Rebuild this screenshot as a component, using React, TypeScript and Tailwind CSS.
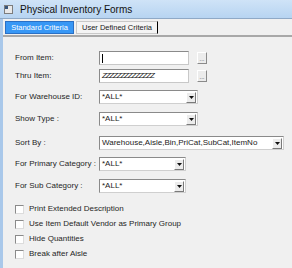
import React from "react";

function Label({ children }: { children: React.ReactNode }) {
  return <div className="w-[84px] shrink-0 text-[8px] leading-[14px] text-[#262626]">{children}</div>;
}

function TextBox({ hatched, cursor }: { hatched?: boolean; cursor?: boolean }) {
  return (
    <div className="flex items-center gap-[8px]">
      <div className="relative h-[14px] w-[90px] border border-t-[#8a8a8a] border-l-[#8a8a8a] border-b-[#c8c8c8] border-r-[#c8c8c8] bg-white overflow-hidden">
        {cursor && <div className="absolute left-[2px] top-[2px] h-[9px] w-px bg-black" />}
        {hatched && (
          <div className="pl-[2px] text-[8px] leading-[12px] italic tracking-[-1.2px] text-[#222]">ZZZZZZZZZZZZZZ</div>
        )}
      </div>
      <div className="flex h-[12px] w-[10px] items-end justify-center border border-t-white border-l-white border-b-[#8a8a8a] border-r-[#8a8a8a] bg-[#ececec] pb-[1px] text-[6px] leading-[6px] text-[#333]">
        ...
      </div>
    </div>
  );
}

function Select({ value, width }: { value: string; width: string }) {
  return (
    <div className={`flex h-[14px] ${width} items-center justify-between border border-t-[#8a8a8a] border-l-[#8a8a8a] border-b-[#cfcfcf] border-r-[#cfcfcf] bg-white pl-[2px] pr-px`}>
      <span className="text-[8px] leading-[12px] text-[#1b1b1b] whitespace-nowrap">{value}</span>
      <div className="flex h-[11px] w-[10px] items-center justify-center border border-t-white border-l-white border-b-[#7a7a7a] border-r-[#7a7a7a] bg-[#ececec]">
        <svg width="5" height="3" viewBox="0 0 5 3">
          <path d="M0 0h5L2.5 3z" fill="#111" />
        </svg>
      </div>
    </div>
  );
}

function Check({ label }: { label: string }) {
  return (
    <div className="flex items-center gap-[5px]">
      <div className="h-[9px] w-[9px] border border-t-[#8a8a8a] border-l-[#8a8a8a] border-b-[#dcdcdc] border-r-[#dcdcdc] bg-white" />
      <span className="text-[8px] leading-[10px] text-[#262626]">{label}</span>
    </div>
  );
}

export default function App() {
  return (
    <div className="h-[268px] w-[292px] overflow-hidden bg-[#f0f0f0] font-['Liberation_Sans',Arial,sans-serif]">
      {/* title bar */}
      <div className="flex h-[19px] items-center gap-[7px] border-b border-[#8fa9c6] bg-gradient-to-b from-[#cfe3f7] to-[#b7d4f1] pl-[4px]">
        <svg width="9" height="9" viewBox="0 0 9 9">
          <rect x="0.5" y="0.5" width="8" height="8" fill="#e8e8e8" stroke="#7d7d7d" />
          <rect x="1" y="1" width="3" height="3" fill="#37557a" />
        </svg>
        <span className="text-[10px] text-[#111]">Physical Inventory Forms</span>
      </div>

      <div className="flex h-[249px] border-l-[3px] border-[#a9c8ea]">
        <div className="flex-1">
          {/* tabs */}
          <div className="flex h-[18px] items-end gap-[2px] border-b-2 border-[#a8a8a8] pl-[2px]">
            <div className="mb-[1px] flex h-[13px] w-[69px] items-center justify-center border border-[#2a6fc4] bg-[#3797f5] text-[7.5px] text-white">
              Standard Criteria
            </div>
            <div className="mb-[1px] flex h-[13px] w-[82px] items-center justify-center border border-[#c9c9c9] border-r-black bg-[#f4f4f4] text-[7.5px] text-[#1b1b1b]">
              User Defined Criteria
            </div>
          </div>

          {/* form */}
          <div className="flex flex-col pl-[12px] pt-[14px]">
            <div className="flex items-center">
              <Label>From Item:</Label>
              <TextBox cursor />
            </div>
            <div className="mt-[4px] flex items-center">
              <Label>Thru Item:</Label>
              <TextBox hatched />
            </div>
            <div className="mt-[7px] flex items-center">
              <Label>For Warehouse ID:</Label>
              <Select value="*ALL*" width="w-[99px]" />
            </div>
            <div className="mt-[8px] flex items-center">
              <Label>Show Type :</Label>
              <Select value="*ALL*" width="w-[99px]" />
            </div>
            <div className="mt-[10px] flex items-center">
              <Label>Sort By :</Label>
              <Select value="Warehouse,Aisle,Bin,PriCat,SubCat,ItemNo" width="w-[185px]" />
            </div>
            <div className="mt-[7px] flex items-center">
              <Label>For Primary Category :</Label>
              <Select value="*ALL*" width="w-[87px]" />
            </div>
            <div className="mt-[8px] flex items-center">
              <Label>For Sub Category :</Label>
              <Select value="*ALL*" width="w-[87px]" />
            </div>

            <div className="mt-[11px] flex flex-col gap-[5px]">
              <Check label="Print Extended Description" />
              <Check label="Use Item Default Vendor as Primary Group" />
              <Check label="Hide Quantities" />
              <Check label="Break after Aisle" />
            </div>
          </div>
        </div>
      </div>
    </div>
  );
}
